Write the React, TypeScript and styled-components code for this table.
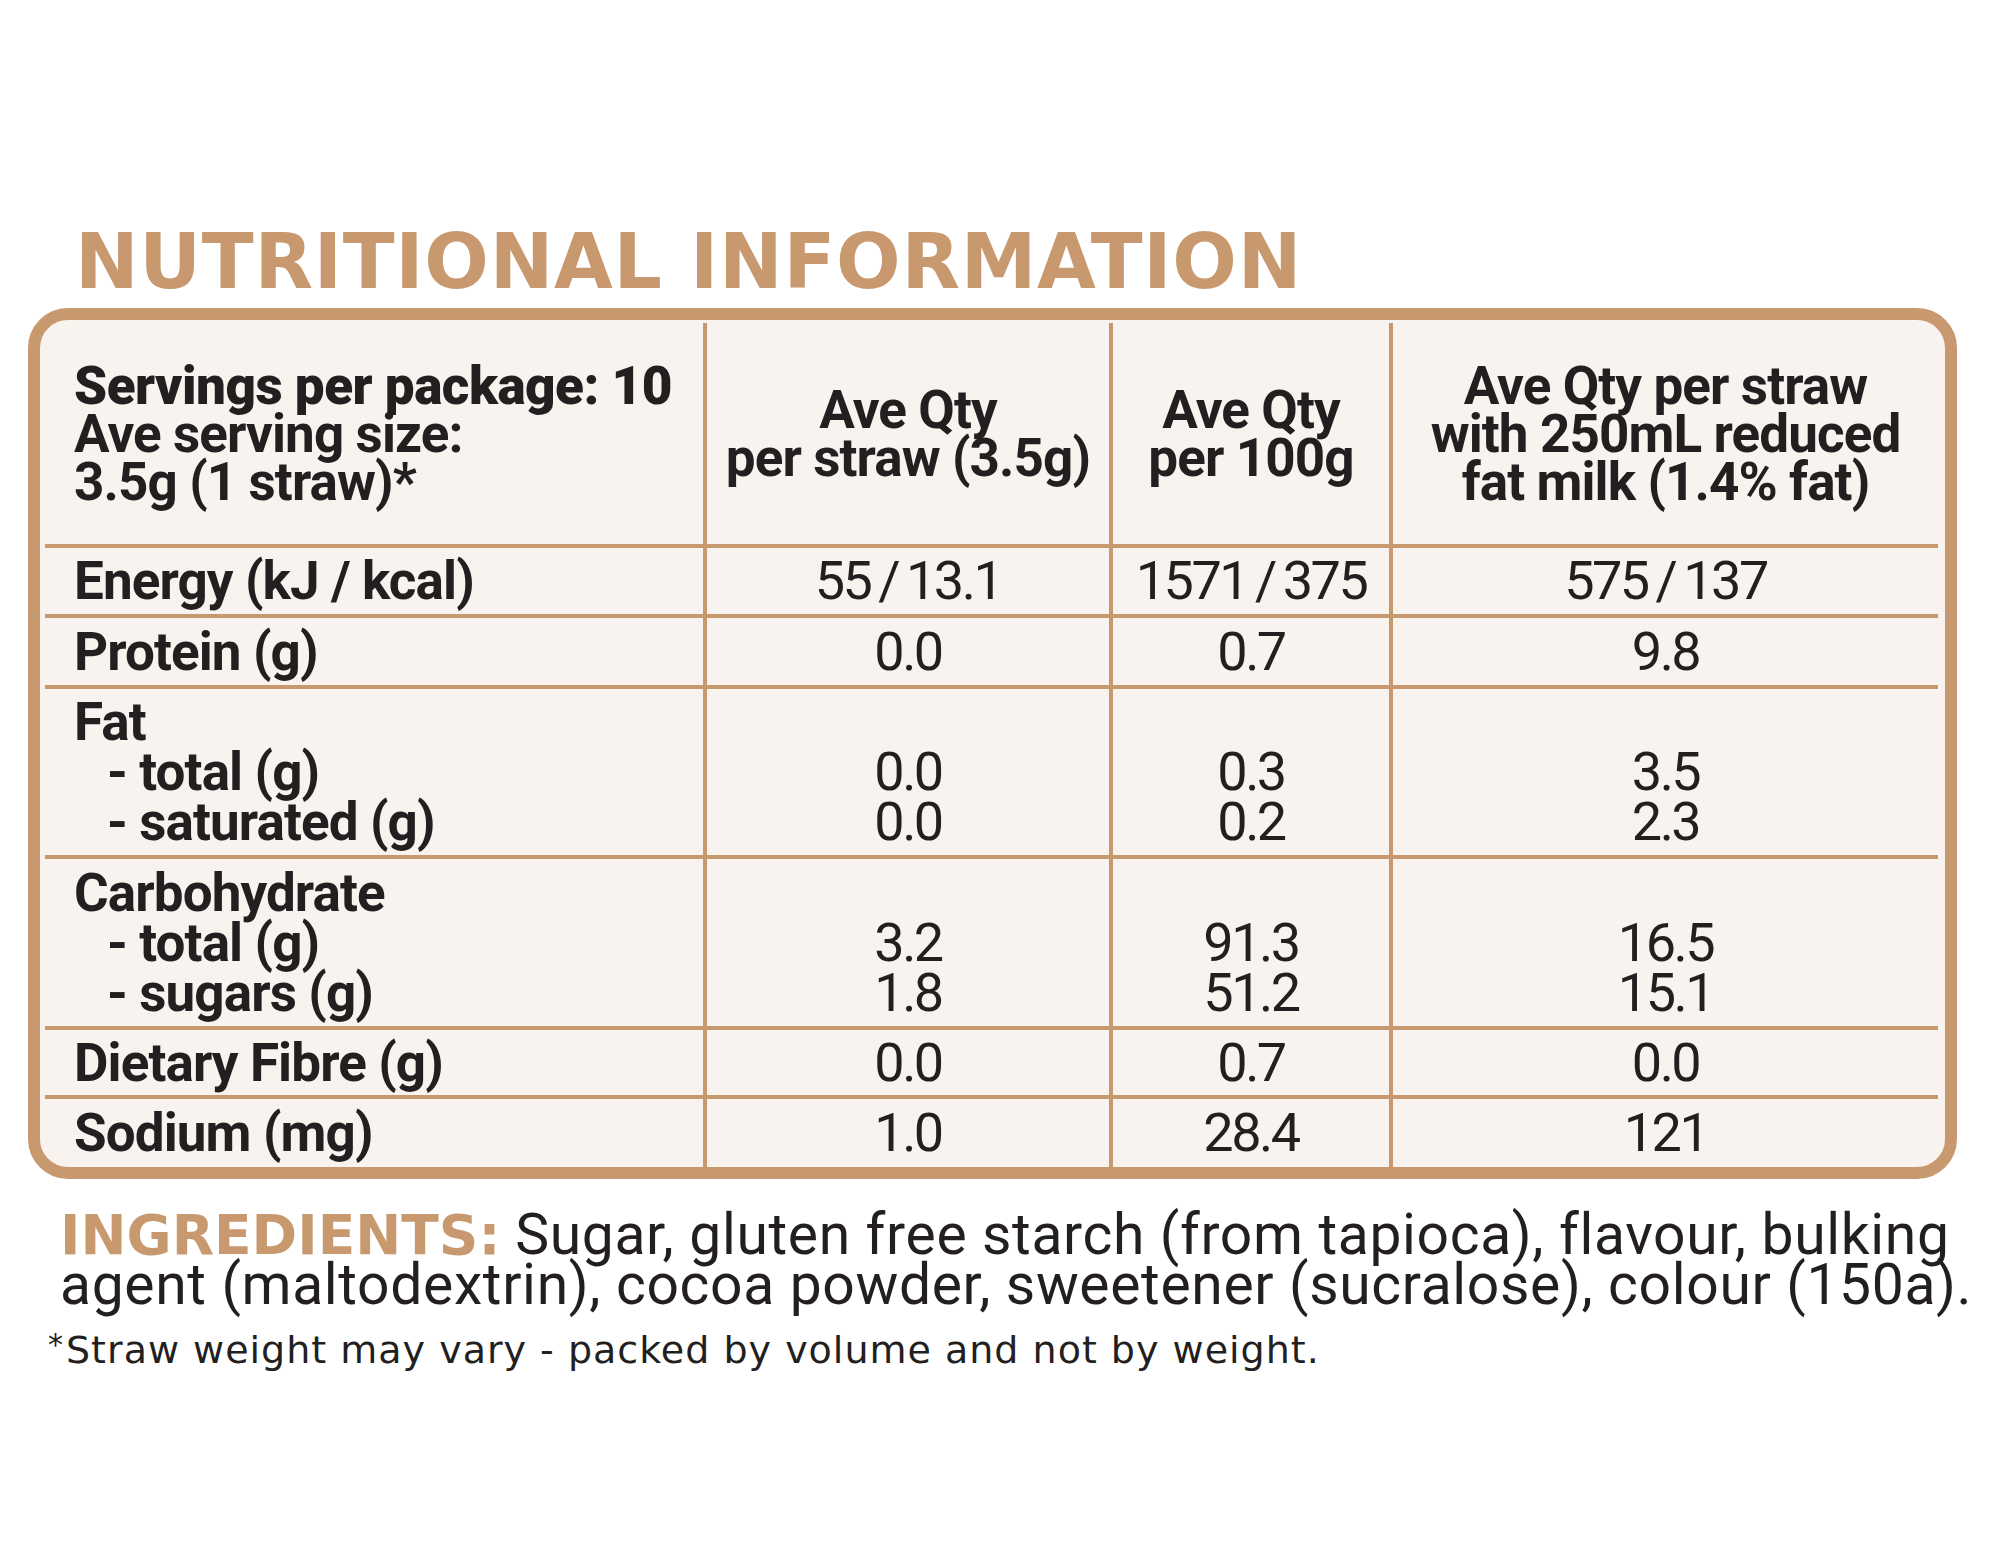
import React from 'react'
import styled, { createGlobalStyle } from 'styled-components'

const TAN = '#c8996f'
const INK = '#231f20'
const CREAM = '#f8f3ee'

const GlobalStyle = createGlobalStyle`
  html, body {
    margin: 0;
    padding: 0;
    background: #ffffff;
  }
`

const Page = styled.div`
  width: 2000px;
  height: 1545px;
  box-sizing: border-box;
  padding: 222px 43px 0 28px;
  color: ${INK};
  font-family: Roboto, 'Liberation Sans', sans-serif;
`

const Title = styled.h1`
  margin: 0 0 6px 47px;
  font-family: 'DejaVu Sans', sans-serif;
  font-weight: 700;
  font-size: 76px;
  line-height: 80px;
  letter-spacing: 0.75px;
  color: ${TAN};
  white-space: nowrap;
`

const Panel = styled.div`
  width: 1929px;
  box-sizing: border-box;
  border: 12px solid ${TAN};
  border-radius: 40px;
  background: ${CREAM};
  padding: 3px 7px 0 5px;
`

const Table = styled.div`
  display: grid;
  grid-template-columns: 658px 406px 280px 549px;
`

const Cell = styled.div<{ $h: number; $first?: boolean; $last?: boolean; $head?: boolean }>`
  box-sizing: border-box;
  height: ${p => p.$h}px;
  display: flex;
  flex-direction: column;
  justify-content: center;
  align-items: ${p => (p.$first ? 'flex-start' : 'center')};
  text-align: ${p => (p.$first ? 'left' : 'center')};
  padding-left: ${p => (p.$first ? '29px' : '0')};
  border-left: ${p => (p.$first ? 'none' : `4px solid ${TAN}`)};
  border-bottom: ${p => (p.$last ? 'none' : `4px solid ${TAN}`)};
  font-size: 53px;
  line-height: ${p => (p.$head ? '48px' : '50px')};
  white-space: nowrap;
`

const Strong = styled.span`
  font-weight: 900;
  letter-spacing: -0.5px;
`

const Label = styled.span<{ $sub?: boolean }>`
  display: block;
  font-weight: 700;
  letter-spacing: -0.9px;
  padding-left: ${p => (p.$sub ? '33px' : '0')};
`

const Value = styled.span`
  display: block;
  font-size: 54px;
  font-weight: 400;
  letter-spacing: -2.5px;
  word-spacing: -3px;
  min-height: 50px;
`

const Ingredients = styled.p`
  margin: 31px 0 0 32px;
  font-size: 57px;
  line-height: 49px;
  font-weight: 400;
  letter-spacing: 0.65px;
  white-space: nowrap;
`

const IngredientsHead = styled.span`
  font-family: 'DejaVu Sans', sans-serif;
  font-size: 55px;
  font-weight: 700;
  letter-spacing: 0;
  color: ${TAN};
`

const Footnote = styled.p`
  margin: 12px 0 0 20px;
  font-family: 'DejaVu Sans', sans-serif;
  font-size: 38px;
  line-height: 48px;
  font-weight: 400;
  letter-spacing: 1px;
  white-space: nowrap;
`

const Star = styled.span`
  font-size: 30px;
  vertical-align: 8px;
  margin-right: 2px;
`

type Row = {
  h: number
  label: { text: string; sub?: boolean }[]
  values: string[][]
}

const rows: Row[] = [
  { h: 70, label: [{ text: 'Energy (kJ / kcal)' }], values: [['55 / 13.1'], ['1571 / 375'], ['575 / 137']] },
  { h: 71, label: [{ text: 'Protein (g)' }], values: [['0.0'], ['0.7'], ['9.8']] },
  {
    h: 170,
    label: [{ text: 'Fat' }, { text: '- total (g)', sub: true }, { text: '- saturated (g)', sub: true }],
    values: [
      ['', '0.0', '0.0'],
      ['', '0.3', '0.2'],
      ['', '3.5', '2.3'],
    ],
  },
  {
    h: 171,
    label: [{ text: 'Carbohydrate' }, { text: '- total (g)', sub: true }, { text: '- sugars (g)', sub: true }],
    values: [
      ['', '3.2', '1.8'],
      ['', '91.3', '51.2'],
      ['', '16.5', '15.1'],
    ],
  },
  { h: 69, label: [{ text: 'Dietary Fibre (g)' }], values: [['0.0'], ['0.7'], ['0.0']] },
  { h: 68, label: [{ text: 'Sodium (mg)' }], values: [['1.0'], ['28.4'], ['121']] },
]

export default function App() {
  return (
    <Page>
      <GlobalStyle />
      <Title>NUTRITIONAL INFORMATION</Title>
      <Panel>
        <Table>
          <Cell $h={225} $first $head>
            <Strong>Servings per package: 10</Strong>
            <Label>Ave serving size:</Label>
            <Label>3.5g (1 straw)*</Label>
          </Cell>
          <Cell $h={225} $head>
            <Label>Ave Qty</Label>
            <Label>per straw (3.5g)</Label>
          </Cell>
          <Cell $h={225} $head>
            <Label>Ave Qty</Label>
            <Label>per 100g</Label>
          </Cell>
          <Cell $h={225} $head>
            <Label>Ave Qty per straw</Label>
            <Label>with 250mL reduced</Label>
            <Label>fat milk (1.4% fat)</Label>
          </Cell>
          {rows.map((r, i) => {
            const last = i === rows.length - 1
            return (
              <React.Fragment key={i}>
                <Cell $h={r.h} $first $last={last}>
                  {r.label.map((l, j) => (
                    <Label key={j} $sub={l.sub}>
                      {l.text}
                    </Label>
                  ))}
                </Cell>
                {r.values.map((col, k) => (
                  <Cell key={k} $h={r.h} $last={last}>
                    {col.map((v, j) => (
                      <Value key={j}>{v}</Value>
                    ))}
                  </Cell>
                ))}
              </React.Fragment>
            )
          })}
        </Table>
      </Panel>
      <Ingredients>
        <IngredientsHead>INGREDIENTS:</IngredientsHead> Sugar, gluten free starch (from tapioca), flavour, bulking
        <br />
        agent (maltodextrin), cocoa powder, sweetener (sucralose), colour (150a).
      </Ingredients>
      <Footnote>
        <Star>*</Star>Straw weight may vary - packed by volume and not by weight.
      </Footnote>
    </Page>
  )
}
